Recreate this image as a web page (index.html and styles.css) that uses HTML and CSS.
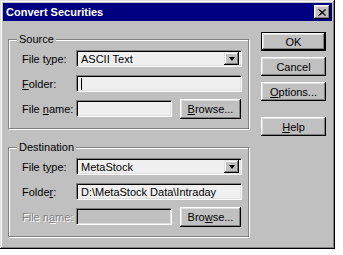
FILE: index.html
```html
<!doctype html>
<html lang="en">
  <head>
    <meta charset="UTF-8" />
    <title>Convert Securities</title>
    <link rel="stylesheet" href="styles.css">
  </head>
  <body>
    <div class="window">
      <div class="titlebar">
        <span class="title">Convert Securities</span>
        <span class="close">
          <svg width="8" height="7" viewBox="0 0 8 7">
            <path d="M0.5 0.5 L7 6.5 M1.5 0.5 L8 6.5 M7 0.5 L0.5 6.5 M8 0.5 L1.5 6.5" stroke="#000" stroke-width="1" />
          </svg>
        </span>
      </div>

      <div class="content">
        <div class="groups">
          <div class="group">
            <span class="legend">Source</span>
            <div class="row">
              <span class="lbl">File t<u>y</u>pe:</span>
              <div class="combo">
                <span class="combo-text">ASCII Text</span>
                <span class="combo-btn"><i class="arrow"></i></span>
              </div>
            </div>
            <div class="row">
              <span class="lbl"><u>F</u>older:</span>
              <div class="field wide"><span class="caret"></span></div>
            </div>
            <div class="row">
              <span class="lbl">File <u>n</u>ame:</span>
              <div class="field short"></div>
              <div class="btn browse"><u>B</u>rowse...</div>
            </div>
          </div>

          <div class="group">
            <span class="legend">Destination</span>
            <div class="row">
              <span class="lbl">File t<u>y</u>pe:</span>
              <div class="combo">
                <span class="combo-text">MetaStock</span>
                <span class="combo-btn"><i class="arrow"></i></span>
              </div>
            </div>
            <div class="row">
              <span class="lbl">Folde<u>r</u>:</span>
              <div class="field wide"><span class="field-text">D:\MetaStock Data\Intraday</span></div>
            </div>
            <div class="row">
              <span class="lbl disabled">File n<u>a</u>me:</span>
              <div class="field short off"></div>
              <div class="btn browse">Bro<u>w</u>se...</div>
            </div>
          </div>
        </div>

        <div class="buttons">
          <div class="btn default">OK</div>
          <div class="btn">Cancel</div>
          <div class="btn"><u>O</u>ptions...</div>
          <div class="btn help"><u>H</u>elp</div>
        </div>
      </div>
    </div>
  </body>
</html>
```

FILE: styles.css
```css
body {
  margin: 0;
  padding: 0;
  background: #fff;
  font-family: "Liberation Sans", Arial, sans-serif;
  font-size: 11px;
  color: #000;
}

u {
  text-decoration: underline;
  text-underline-offset: 1px;
}

.window {
  width: 335px;
  height: 249px;
  box-sizing: border-box;
  padding: 3px;
  background: #c0c0c0;
  box-shadow:
    inset -1px -1px #000,
    inset 1px 1px #dfdfdf,
    inset -2px -2px #808080,
    inset 2px 2px #fff;
}

.titlebar {
  height: 18px;
  background: #000080;
  color: #fff;
  display: flex;
  align-items: center;
  justify-content: space-between;
  padding: 0 2px 0 3px;
}

.title {
  font-weight: bold;
  font-size: 11px;
}

.close {
  width: 16px;
  height: 14px;
  box-sizing: border-box;
  background: #c0c0c0;
  display: flex;
  align-items: center;
  justify-content: center;
  box-shadow:
    inset -1px -1px #000,
    inset 1px 1px #fff,
    inset -2px -2px #808080,
    inset 2px 2px #dfdfdf;
}

.content {
  display: flex;
  padding: 11px 0 0 5px;
}

.groups {
  width: 241px;
  padding-top: 7px;
  display: flex;
  flex-direction: column;
  gap: 18px;
}

.group {
  position: relative;
  height: 90px;
  box-sizing: border-box;
  border: 1px solid #808080;
  box-shadow:
    inset 1px 1px #fff,
    1px 1px #fff;
  padding: 10px 0 0 13px;
  display: flex;
  flex-direction: column;
  gap: 8px;
}

.legend {
  position: absolute;
  top: -7px;
  left: 8px;
  padding: 0 2px;
  line-height: 13px;
  background: #c0c0c0;
}

.row {
  height: 17px;
  display: flex;
  align-items: center;
}

.lbl {
  width: 54px;
  flex: none;
}

.lbl.disabled {
  color: #808080;
  text-shadow: 1px 1px #fff;
}

.combo,
.field {
  height: 17px;
  box-sizing: border-box;
  background: #f0f0f0;
  border-top: 1px solid #808080;
  border-left: 1px solid #808080;
  border-bottom: 1px solid #fff;
  border-right: 1px solid #fff;
  box-shadow:
    inset 1px 1px #000,
    inset -1px -1px #dfdfdf;
  display: flex;
  align-items: center;
}

.combo {
  width: 166px;
  justify-content: space-between;
  padding: 2px 2px 2px 4px;
}

.combo-btn {
  width: 15px;
  height: 13px;
  box-sizing: border-box;
  background: #c0c0c0;
  display: flex;
  align-items: center;
  justify-content: center;
  box-shadow:
    inset -1px -1px #000,
    inset 1px 1px #dfdfdf,
    inset -2px -2px #808080,
    inset 2px 2px #fff;
}

.arrow {
  width: 0;
  height: 0;
  border-top: 4px solid #000;
  border-left: 3.5px solid transparent;
  border-right: 3.5px solid transparent;
  margin-top: 1px;
}

.field.wide {
  width: 166px;
  padding-left: 4px;
}

.field.short {
  width: 96px;
}

.field.off {
  background: #c0c0c0;
}

.caret {
  width: 1px;
  height: 12px;
  background: #000;
}

.btn {
  height: 19px;
  box-sizing: border-box;
  background: #c0c0c0;
  display: flex;
  align-items: center;
  justify-content: center;
  box-shadow:
    inset -1px -1px #000,
    inset 1px 1px #fff,
    inset -2px -2px #808080,
    inset 2px 2px #dfdfdf;
}

.btn.browse {
  width: 61px;
  height: 20px;
  flex: none;
  margin-left: 8px;
}

.btn.default {
  box-shadow:
    inset 0 0 0 1px #000,
    inset -2px -2px #000,
    inset 2px 2px #fff,
    inset -3px -3px #808080,
    inset 3px 3px #dfdfdf;
}

.buttons {
  width: 65px;
  margin-left: 12px;
  display: flex;
  flex-direction: column;
  gap: 6px;
}

.btn.help {
  margin-top: 10px;
}
```
